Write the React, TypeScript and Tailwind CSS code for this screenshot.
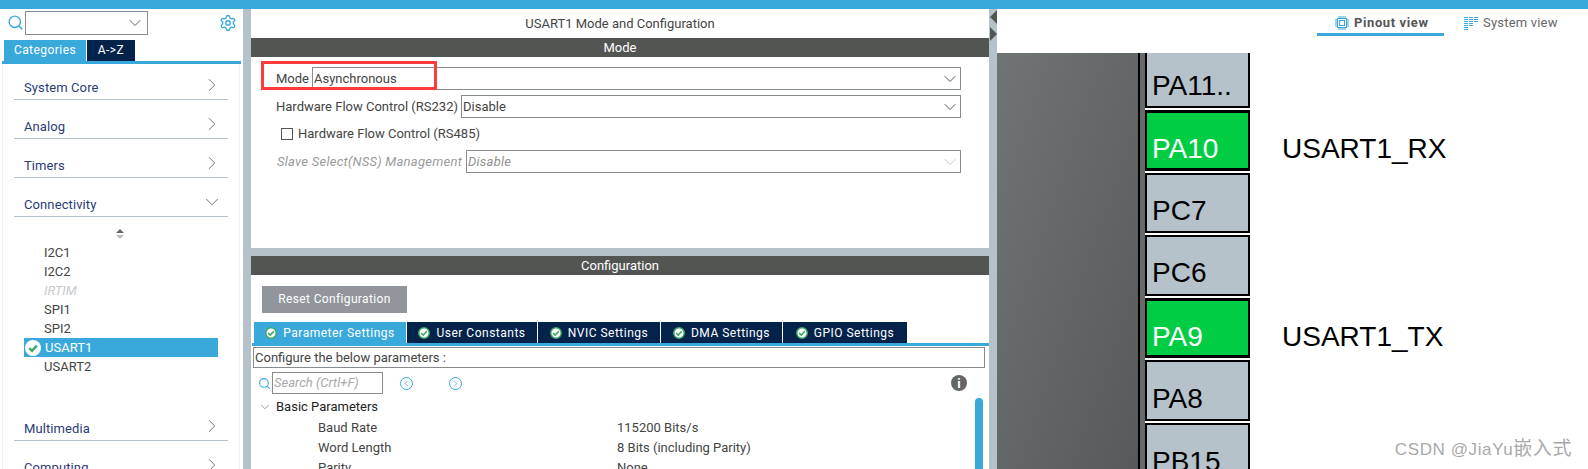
import React from 'react';
import { Search, Settings, ChevronRight, ChevronDown, ChevronLeft } from 'lucide-react';

const UI_FONT = 'font-[Roboto,"Liberation_Sans",sans-serif]';

const pins = [
  { name: 'PA11..', cls: 'h-[55px] pb-[4px]', active: false },
  { name: 'PA10', cls: 'h-[61px] pb-[3px]', active: true, label: 'USART1_RX', mb: 'mb-[6px]' },
  { name: 'PC7', cls: 'h-[60px] pb-[4px] border-t-2', active: false },
  { name: 'PC6', cls: 'h-[61px] pb-[5px] border-t-2', active: false },
  { name: 'PA9', cls: 'h-[60px] pb-[2px]', active: true, label: 'USART1_TX', mb: 'mb-[5px]' },
  { name: 'PA8', cls: 'h-[61px] pb-[4px] border-t-2', active: false },
  { name: 'PB15', cls: 'h-[60px] pb-[3px] border-t-2', active: false },
];

const peripherals = ['I2C1', 'I2C2', 'IRTIM', 'SPI1', 'SPI2', 'USART1', 'USART2'];

const configTabs = [
  { name: 'Parameter Settings', w: 'w-[152px]', on: true },
  { name: 'User Constants', w: 'w-[130px]', on: false },
  { name: 'NVIC Settings', w: 'w-[122px]', on: false },
  { name: 'DMA Settings', w: 'w-[121px]', on: false },
  { name: 'GPIO Settings', w: 'w-[124px]', on: false },
];

const CheckBadge = ({ size, ring }: { size: number; ring?: boolean }) => (
  <svg width={size} height={size} viewBox="0 0 16 16" className="shrink-0">
    <circle cx="8" cy="8" r={ring ? 7 : 8} fill="#fff" stroke={ring ? '#3aa864' : 'none'} strokeWidth="2" />
    <path d="M4.2 8.2 L7 10.8 L11.8 5.6" fill="none" stroke="#3aa864" strokeWidth={ring ? 2 : 2.4} />
  </svg>
);

const Category = ({ name, open }: { name: string; open?: boolean }) => (
  <div className="mx-[11px] flex h-[39px] items-end justify-between border-b border-[#b6c2c9] pb-[3px] pl-[10px] pr-[5px] text-[13px] leading-[16px] tracking-[0.1px] text-[#2b3a78] first:h-[36px]">
    <span>{name}</span>
    {open ? (
      <ChevronDown size={22} strokeWidth={1} className="text-[#666]" />
    ) : (
      <ChevronRight size={22} strokeWidth={1} className="text-[#666]" />
    )}
  </div>
);

const Select = ({ value, disabled }: { value: string; disabled?: boolean }) => (
  <div className="flex h-[23px] flex-1 items-center justify-between border border-[#868c90] pl-[1px] text-[13px]">
    <span className={disabled ? 'text-[#8f8f8f]' : 'text-[#444]'}>{value}</span>
    <ChevronDown size={20} strokeWidth={1.2} className={disabled ? 'text-[#c8c8c8]' : 'text-[#555]'} />
  </div>
);

const ChipIcon = () => (
  <svg width="14" height="14" viewBox="0 0 14 14" fill="none" stroke="#39a9dc">
    <rect x="2.5" y="2.5" width="9" height="9" />
    <rect x="4.5" y="4.5" width="5" height="5" />
    <path d="M4 0V2M6 0V2M8 0V2M10 0V2M4 12V14M6 12V14M8 12V14M10 12V14M0 4H2M0 6H2M0 8H2M0 10H2M12 4H14M12 6H14M12 8H14M12 10H14" />
  </svg>
);

const SystemIcon = () => (
  <svg width="14" height="14" viewBox="0 0 14 14" stroke="#39a9dc" strokeWidth="1">
    <path d="M0 1.5H4M5 1.5H9M10 1.5H14M0 3.5H4M5 3.5H9M10 3.5H14M0 5.5H4M5 5.5H9M10 5.5H14M0 7.5H4M5 7.5H9M0 9.5H4M5 9.5H9M0 11.5H4M0 13.5H4" />
  </svg>
);

export default function App() {
  return (
    <div className={`flex h-[469px] w-[1588px] flex-col overflow-hidden bg-white ${UI_FONT}`}>
      <div className="h-[9px] shrink-0 bg-[#39a9dc]" />
      <div className="flex flex-1 overflow-hidden">
        {/* left: categories */}
        <aside className="flex w-[243px] shrink-0 flex-col overflow-hidden">
          <div className="flex h-[31px] shrink-0 items-start pt-[2px]">
            <Search size={17} strokeWidth={2} className="ml-[7px] mt-[3px] text-[#39a9dc]" />
            <div className="ml-[1px] flex h-[24px] w-[123px] items-center justify-end border border-[#868c90] pr-[2px]">
              <ChevronDown size={20} strokeWidth={1.2} className="text-[#666]" />
            </div>
            <Settings size={18} strokeWidth={1.8} className="ml-[71px] mt-[3px] text-[#39a9dc]" />
          </div>
          <div className="ml-[4px] flex h-[21px] shrink-0 gap-[1px] text-[12px] leading-[21px] tracking-[0.45px] text-white">
            <div className="w-[82px] bg-[#39a9dc] text-center">Categories</div>
            <div className="w-[48px] bg-[#03234b] text-center">A-&gt;Z</div>
          </div>
          <div className="ml-[2px] mr-[2px] h-[3px] shrink-0 bg-[#39a9dc]" />
          <div className="ml-[2px] mr-[3px] flex-1 border-x border-[#eef0f1]">
            <Category name="System Core" />
            <Category name="Analog" />
            <Category name="Timers" />
            <Category name="Connectivity" open />
            {/* list scroll arrows */}
            <div className="flex h-[22px] flex-col items-center gap-[2px] pr-[2px] pt-[12px]">
              <div className="h-0 w-0 border-x-[4px] border-b-[4px] border-x-transparent border-b-[#666]" />
              <div className="h-0 w-0 border-x-[4px] border-t-[4px] border-x-transparent border-t-[#bbb]" />
            </div>
            <div className="mt-[4px]">
              {peripherals.map((p) => (
                <div
                  key={p}
                  className={`ml-[21px] mr-[21px] flex h-[19px] items-center text-[13px] ${
                    p === 'USART1'
                      ? 'bg-[#39a9dc] pl-[1px] text-white'
                      : p === 'IRTIM'
                        ? 'pl-[20px] italic text-[#c4c9cc]'
                        : 'pl-[20px] text-[#444]'
                  }`}
                >
                  {p === 'USART1' && <CheckBadge size={16} />}
                  <span className={p === 'USART1' ? 'ml-[4px]' : ''}>{p}</span>
                </div>
              ))}
            </div>
            <div className="mt-[29px]">
              <Category name="Multimedia" />
              <Category name="Computing" />
            </div>
          </div>
        </aside>

        <div className="w-[8px] shrink-0 bg-[#b6c2c9]" />

        {/* middle: mode and configuration */}
        <main className="flex w-[738px] shrink-0 flex-col overflow-hidden bg-[#b6c2c9]">
          <section className="relative h-[239px] shrink-0 bg-white">
            <div className="h-[29px] text-center text-[13px] leading-[30px] text-[#444]">
              USART1 Mode and Configuration
            </div>
            <div className="h-[19px] bg-[#535553] text-center text-[13px] leading-[19px] text-white">Mode</div>
            <div className="ml-[25px] mr-[28px] mt-[10px] flex items-center text-[13px] text-[#444]">
              <span className="w-[36px]">Mode</span>
              <Select value="Asynchronous" />
            </div>
            <div className="ml-[25px] mr-[28px] mt-[5px] flex items-center text-[13px] text-[#444]">
              <span className="w-[185px] whitespace-nowrap">Hardware Flow Control (RS232)</span>
              <Select value="Disable" />
            </div>
            <div className="ml-[30px] mt-[9px] flex h-[14px] items-center text-[13px] text-[#444]">
              <div className="h-[12px] w-[12px] border border-[#555]" />
              <span className="ml-[5px]">Hardware Flow Control (RS485)</span>
            </div>
            <div className="ml-[26px] mr-[28px] mt-[9px] flex items-center text-[13px] italic tracking-[0.25px] text-[#9a9a9a]">
              <span className="w-[189px] whitespace-nowrap">Slave Select(NSS) Management</span>
              <Select value="Disable" disabled />
            </div>
            {/* red annotation box */}
            <div className="absolute left-[10px] top-[52px] h-[29px] w-[176px] border-[3px] border-[#ff3b3b]" />
          </section>

          <section className="mt-[8px] flex flex-1 flex-col overflow-hidden bg-white">
            <div className="h-[19px] shrink-0 bg-[#535553] text-center text-[13px] leading-[19px] text-white">
              Configuration
            </div>
            <div className="ml-[11px] mt-[11px] h-[27px] w-[145px] shrink-0 bg-[#90969b] text-center text-[12px] leading-[26px] tracking-[0.35px] text-white">
              Reset Configuration
            </div>
            <div className="ml-[3px] mt-[9px] flex h-[21px] shrink-0 gap-[1px]">
              {configTabs.map((t) => (
                <div
                  key={t.name}
                  className={`${t.w} flex items-center justify-center gap-[6px] text-[12px] tracking-[0.5px] text-white ${
                    t.on ? 'bg-[#39a9dc]' : 'bg-[#03234b]'
                  }`}
                >
                  <CheckBadge size={12} ring />
                  {t.name}
                </div>
              ))}
            </div>
            <div className="ml-[1px] h-[3px] shrink-0 bg-[#39a9dc]" />
            <div className="ml-[2px] mr-[4px] mt-[1px] h-[21px] shrink-0 border border-[#868c90] pl-[1px] text-[13px] leading-[19px] text-[#444]">
              Configure the below parameters :
            </div>
            <div className="relative flex-1">
              <div className="flex items-center pl-[7px] pt-[4px]">
                <Search size={13} strokeWidth={2} className="text-[#39a9dc]" />
                <div className="ml-[1px] h-[22px] w-[111px] border border-[#868c90] pl-[1px] text-[13px] italic leading-[20px] text-[#a8a8a8]">
                  Search (Crtl+F)
                </div>
                <ChevronLeft size={11} strokeWidth={1.5} className="ml-[17px] box-content rounded-full border border-[#39a9dc] text-[#39a9dc]" />
                <ChevronRight size={11} strokeWidth={1.5} className="ml-[36px] box-content rounded-full border border-[#39a9dc] text-[#39a9dc]" />
                <div className="ml-auto mr-[22px] flex h-[16px] w-[16px] items-center justify-center rounded-full bg-[#666] text-[13px] font-bold leading-none text-white">
                  i
                </div>
              </div>
              <div className="ml-[7px] mt-[3px] flex h-[20px] items-center text-[13px] text-[#222]">
                <ChevronDown size={14} strokeWidth={1} className="text-[#555]" />
                <span className="ml-[4px]">Basic Parameters</span>
              </div>
              <div className="pt-[1px]">
                {[
                  ['Baud Rate', '115200 Bits/s'],
                  ['Word Length', '8 Bits (including Parity)'],
                  ['Parity', 'None'],
                ].map(([k, v]) => (
                  <div key={k} className="flex h-[20px] items-center pl-[67px] text-[13px] text-[#444]">
                    <span className="w-[299px]">{k}</span>
                    <span>{v}</span>
                  </div>
                ))}
              </div>
              <div className="absolute right-[6px] top-[30px] h-[80px] w-[8px] rounded-t-full bg-[#39a9dc]" />
            </div>
          </section>
        </main>

        {/* collapse handles */}
        <div className="flex w-[8px] shrink-0 flex-col items-end bg-[#b6c2c9] pt-[1px]">
          <div className="h-0 w-0 border-y-[7px] border-r-[7px] border-y-transparent border-r-[#535553]" />
          <div className="mt-[3px] h-0 w-0 border-y-[7px] border-l-[7px] border-y-transparent border-l-[#535553]" />
        </div>

        {/* right: pinout */}
        <div className="relative flex flex-1 flex-col overflow-hidden">
          <div className="flex h-[44px] shrink-0 pl-[320px] text-[13px]">
            <div className="flex h-[27px] w-[127px] items-center gap-[5px] border-b-[3px] border-[#39a9dc] pl-[18px] pt-[4px] font-bold tracking-[0.6px] text-[#555]">
              <ChipIcon />
              Pinout view
            </div>
            <div className="ml-[20px] flex h-[27px] items-center gap-[5px] pt-[1px] tracking-[0.2px] text-[#666]">
              <SystemIcon />
              System view
            </div>
          </div>
          <div className="flex flex-1 overflow-hidden">
            <div className="w-[141px] shrink-0 bg-gradient-to-br from-[#6f7475] to-[#565a5a]" />
            <div className="w-[2px] shrink-0 bg-black" />
            <div className="w-[5px] shrink-0 bg-[#666a6a]" />
            <div className="flex flex-col gap-[2px] font-['Liberation_Sans',Arial,sans-serif]">
              {pins.map((p) => (
                <div key={p.name} className="flex shrink-0 items-end">
                  <div
                    className={`${p.cls} flex w-[105px] items-end border-black pl-[5px] text-[28px] leading-[32px] ${
                      p.active
                        ? 'border-x-2 border-y-[3px] bg-[#00cc44] text-white'
                        : 'border-x-2 border-b-2 bg-[#b6c2c9] text-black'
                    }`}
                  >
                    {p.name}
                  </div>
                  {p.label && (
                    <span className={`${p.mb} ml-[32px] text-[28px] leading-[32px] text-black`}>{p.label}</span>
                  )}
                </div>
              ))}
            </div>
          </div>
          {/* watermark */}
          <div className="absolute bottom-[7px] right-[16px] flex items-baseline font-['Liberation_Sans','Noto_Sans_CJK_SC',sans-serif] text-[17px] leading-[24px] tracking-[0.6px] text-[#a9a9a9]">
            CSDN @JiaYu<span className="text-[19px]">嵌入式</span>
          </div>
        </div>
      </div>
    </div>
  );
}
